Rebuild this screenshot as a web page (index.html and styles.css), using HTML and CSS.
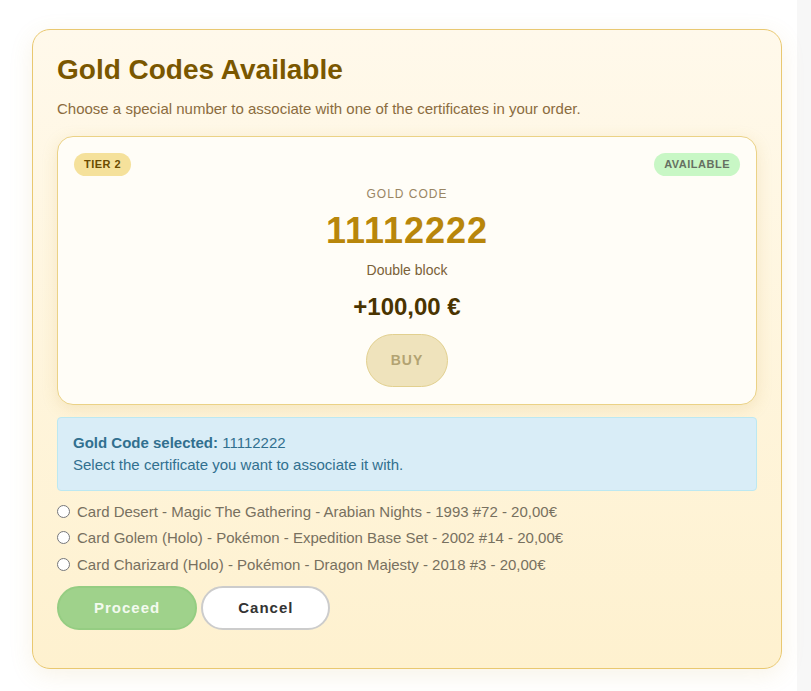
FILE: index.html
```html
<!DOCTYPE html>
<html lang="en">
<head>
  <meta charset="UTF-8">
  <title>Gold Codes</title>
  <link rel="stylesheet" href="styles.css">
</head>
<body>
  <div class="page">
    <div class="gold-panel">
      <h2 class="panel-title">Gold Codes Available</h2>
      <p class="panel-sub">Choose a special number to associate with one of the certificates in your order.</p>

      <div class="code-card">
        <div class="code-badges">
          <span class="badge tier">Tier 2</span>
          <span class="badge status">Available</span>
        </div>
        <div class="code-label">Gold Code</div>
        <div class="code-number">11112222</div>
        <div class="code-desc">Double block</div>
        <div class="code-price">+100,00 €</div>
        <button class="btn-buy" disabled>Buy</button>
      </div>

      <div class="info-box">
        <strong>Gold Code selected:</strong> 11112222<br>
        Select the certificate you want to associate it with.
      </div>

      <div class="cert-list">
        <label class="cert"><input type="radio" name="cert"> Card Desert - Magic The Gathering - Arabian Nights - 1993 #72 - 20,00€</label>
        <label class="cert"><input type="radio" name="cert"> Card Golem (Holo) - Pokémon - Expedition Base Set - 2002 #14 - 20,00€</label>
        <label class="cert"><input type="radio" name="cert"> Card Charizard (Holo) - Pokémon - Dragon Majesty - 2018 #3 - 20,00€</label>
      </div>

      <div class="actions">
        <button class="btn btn-proceed">Proceed</button>
        <button class="btn btn-cancel">Cancel</button>
      </div>
    </div>
  </div>
</body>
</html>
```

FILE: styles.css
```css
* {
  box-sizing: border-box;
}

body {
  margin: 0;
  background: #f7f7f7;
  font-family: "Liberation Sans", Arial, sans-serif;
}

.page {
  width: 797px;
  min-height: 100vh;
  background: #ffffff;
  padding: 29px 0 0 32px;
}

.gold-panel {
  width: 750px;
  padding: 24px;
  border: 1px solid #e9c870;
  border-radius: 18px;
  background: linear-gradient(180deg, #fff9eb 0%, #fef1cf 100%);
  box-shadow: 0 6px 24px rgba(200, 160, 60, 0.12);
}

.panel-title {
  margin: 0;
  font-size: 28px;
  line-height: 32px;
  font-weight: bold;
  color: #7a5700;
}

.panel-sub {
  margin: 13px 0 0;
  font-size: 15px;
  line-height: 20px;
  color: #8b6c3e;
}

.code-card {
  margin-top: 17px;
  padding: 16px 16px 17px;
  border: 1px solid #ebd286;
  border-radius: 16px;
  background: #fffdf7;
  text-align: center;
  box-shadow: 0 4px 16px rgba(200, 160, 60, 0.18);
}

.code-badges {
  display: flex;
  justify-content: space-between;
}

.badge {
  display: inline-block;
  padding: 5px 10px;
  border-radius: 12px;
  font-size: 11px;
  line-height: 13px;
  font-weight: bold;
  letter-spacing: 0.5px;
  text-transform: uppercase;
}

.badge.tier {
  background: #f5e19b;
  color: #6a4c00;
}

.badge.status {
  background: #c8f7c5;
  color: #667062;
}

.code-label {
  margin-top: 10px;
  font-size: 12px;
  line-height: 16px;
  letter-spacing: 1px;
  text-transform: uppercase;
  color: #9a8664;
}

.code-number {
  margin-top: 9px;
  font-size: 36px;
  line-height: 40px;
  font-weight: bold;
  letter-spacing: 1px;
  color: #b8860b;
}

.code-desc {
  margin-top: 10px;
  font-size: 14px;
  line-height: 18px;
  color: #7a6138;
}

.code-price {
  margin-top: 14px;
  font-size: 24px;
  line-height: 28px;
  font-weight: bold;
  color: #4a3400;
}

.btn-buy {
  margin-top: 13px;
  padding: 17px 24px;
  border: 1px solid #e2d08f;
  border-radius: 27px;
  background: #efe3bc;
  font-family: inherit;
  font-size: 14px;
  line-height: 17px;
  font-weight: bold;
  letter-spacing: 1px;
  text-transform: uppercase;
  color: #b3a372;
}

.info-box {
  margin-top: 12px;
  padding: 14px 15px;
  border: 1px solid #bce8f1;
  border-radius: 4px;
  background: #d9edf7;
  font-size: 15px;
  line-height: 22px;
  color: #31708f;
}

.cert-list {
  margin-top: 7px;
  display: flex;
  flex-direction: column;
}

.cert {
  display: flex;
  align-items: center;
  height: 26.5px;
  font-size: 15px;
  color: #77705f;
}

.cert input {
  width: 13px;
  height: 13px;
  margin: 0 7px 0 0;
}

.actions {
  margin: 8px 0 14px;
  display: flex;
  gap: 4px;
}

.btn {
  padding: 11px 35px;
  border-radius: 22px;
  font-family: inherit;
  font-size: 15px;
  line-height: 18px;
  font-weight: bold;
  letter-spacing: 1px;
  cursor: pointer;
}

.btn-proceed {
  border: 2px solid #95cd82;
  background: #9fd28b;
  color: #f3faef;
}

.btn-cancel {
  border: 2px solid #cccccc;
  background: #ffffff;
  color: #333333;
}
```
